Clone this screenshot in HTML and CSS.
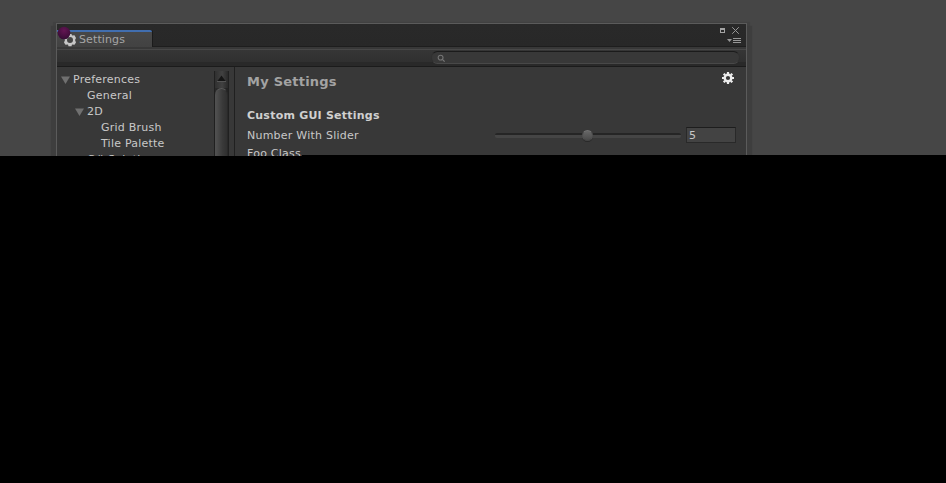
FILE: index.html
```html
<!DOCTYPE html>
<html lang="en">
<head>
<meta charset="utf-8">
<title>Settings</title>
<link rel="stylesheet" href="styles.css">
</head>
<body>
<div class="desktop">
  <div class="window">
    <svg class="cursor-dot" viewBox="0 0 14 14"><defs><radialGradient id="plum" cx=".5" cy=".3" r=".7"><stop offset="0" stop-color="#641553"/><stop offset="1" stop-color="#360c35"/></radialGradient></defs><circle cx="7" cy="7" r="6.3" fill="url(#plum)"/></svg>
    <header class="tabbar">
      <div class="tab">
        <svg class="tab-gear" viewBox="0 0 14 14"><path d="M5.500 1h3l.5 1.500 2.500-.2L13 5l-1 2 1 2.500-1.500 2.300-2.500-.3-.5 1.800h-3L5 11.500l-2.500.3L1 9.500 2 7 1 5l1.500-2.700 2.500.2zM7 4a3 3 0 100 6 3 3 0 000-6z" fill="#c6c6c6" fill-rule="evenodd"/></svg>
        <span class="tab-label">Settings</span>
      </div>
      <svg class="controls" viewBox="0 0 22 20"><rect x="1.500" y="4.500" width="4" height="4" fill="none" stroke="#a4a4a4"/><path d="M1 5.500h5" stroke="#a4a4a4"/><path d="M13.200 3.200l6.600 6.600M19.800 3.200l-6.600 6.600" stroke="#979797"/><path d="M8 15h5l-2.500 3z" fill="#979797"/><path d="M14 14.500h8M14 16.500h8M14 18.500h8" stroke="#979797"/></svg>
    </header>
    <div class="toolbar">
      <div class="search">
        <svg class="lens" viewBox="0 0 10 10"><circle cx="4" cy="4" r="2.700" fill="none" stroke="#777" stroke-width="1.200"/><path d="M6 6l2.500 2.500" stroke="#777" stroke-width="1.400"/></svg>
      </div>
    </div>
    <div class="content">
      <nav class="tree">
        <div class="row"><svg class="arrow" viewBox="0 0 9 8"><path d="M0 .5h9L4.500 8z"/></svg><span>Preferences</span></div>
        <div class="row level1"><span>General</span></div>
        <div class="row level1"><svg class="arrow" viewBox="0 0 9 8"><path d="M0 .5h9L4.500 8z"/></svg><span>2D</span></div>
        <div class="row level2"><span>Grid Brush</span></div>
        <div class="row level2"><span>Tile Palette</span></div>
        <div class="row level1"><span>C# Solution</span></div>
      </nav>
      <div class="scrollbar">
        <div class="scroll-up"><svg viewBox="0 0 14 14"><path d="M3.500 10h8L7.500 4.500z" fill="#151515"/><path d="M3 10.500h9" stroke="#555"/></svg></div>
        <div class="scroll-thumb"></div>
      </div>
      <main class="panel">
        <div class="title-row">
          <h1>My Settings</h1>
          <svg class="gear" viewBox="0 0 12 12"><circle cx="6" cy="6" r="3.300" fill="none" stroke="#ededed" stroke-width="2.400"/><path d="M6 0v2M6 10v2M0 6h2M10 6h2M1.700 1.700l1.400 1.400M8.900 8.900l1.400 1.400M1.700 10.300l1.400-1.400M8.900 3.100l1.400-1.400" stroke="#ededed" stroke-width="2.200"/></svg>
        </div>
        <h2>Custom GUI Settings</h2>
        <div class="field">
          <span class="label">Number With Slider</span>
          <div class="slider"><div class="knob"></div></div>
          <div class="number">5</div>
        </div>
        <div class="foo">Foo Class</div>
      </main>
    </div>
  </div>
  <div class="edge"></div>
</div>
</body>
</html>
```
FILE: styles.css
```css
* { box-sizing: border-box; }
body { margin: 0; height: 483px; overflow: hidden; background: #000; color: #c8c8c8; font: 11px/16px "DejaVu Sans", sans-serif; letter-spacing: .23px; }
svg { display: block; flex: none; }
.desktop { position: relative; height: 156px; padding: 23px 0 0 56px; overflow: hidden; background: #464646; }
.edge { position: absolute; left: 302px; right: 0; bottom: 0; height: 1px; background: #000; }
.window { position: relative; width: 691px; height: 400px; border: 1px solid #5b5b5b; background: #383838; box-shadow: 0 8px 1px 5px #3e3e3e, 0 2px 1px 3px #414141; }
.cursor-dot { position: absolute; z-index: 2; left: 0; top: 2px; width: 14px; height: 14px; }
.tabbar { display: flex; justify-content: space-between; height: 23px; padding: 6px 5px 0 0; background: linear-gradient(#292929, #282828); border-bottom: 1px solid #1e1e1e; }
.tab { display: flex; align-items: center; width: 95px; height: 17px; padding-left: 6px; border-top: 2px solid #416eaf; border-radius: 0 2px 0 0; background: linear-gradient(#484848, #424242); box-shadow: 1px 0 #1b1b1b; color: #a5a5a5; }
.tab-gear { width: 14px; height: 14px; }
.tab-label { margin: 1px 0 0 2px; letter-spacing: .12px; }
.controls { width: 22px; height: 20px; margin-top: -6px; }
.toolbar { display: flex; justify-content: flex-end; height: 20px; padding: 4px 6px 0 0; border-bottom: 1px solid #1b1b1b; background: linear-gradient(#383838 0 2px, #484848 2px 3px, #363636 3px, #303030 15px, #292929 15px); }
.search { width: 309px; height: 13px; padding: 2px 0 0 5px; border: 1px solid #303030; border-top-color: #1b1b1b; border-bottom-color: #484848; border-radius: 7px; background: #383838; }
.lens { width: 9px; height: 9px; }
.content { display: flex; height: 350px; }
.tree { width: 157px; padding: 5px 0 0 4px; overflow: hidden; white-space: nowrap; }
.row { display: flex; align-items: center; height: 16px; padding-left: 12px; }
.row .arrow { width: 9px; height: 8px; margin: 0 3px 0 -12px; fill: #707070; }
.level1 { padding-left: 26px; }
.level2 { padding-left: 40px; }
.scrollbar { width: 15px; margin-top: 4px; border: solid #202020; border-width: 0 1px; background: linear-gradient(90deg, #292929, #2e2e2e 50%, #222); }
.scroll-up { height: 17px; background: linear-gradient(90deg, #303030, #414141 55%, #292929); }
.scroll-up svg { width: 14px; height: 14px; margin-left: -1px; }
.scroll-thumb { height: 300px; border: 1px solid #292929; border-top-color: #595959; border-left-color: #505050; border-radius: 7px; background: linear-gradient(90deg, #505050, #393939 60%, #303030); }
.panel { flex: 1; margin-left: 5px; padding: 5px 10px 0 12px; border-left: 1px solid #202020; }
.title-row { display: flex; justify-content: space-between; height: 34px; }
h1 { margin: 0; font-size: 13px; line-height: 20px; color: #a3a3a3; }
.gear { width: 12px; height: 12px; margin-right: 2px; }
h2 { margin: 2px 0 0; font-size: 11px; line-height: 16px; color: #d0d0d0; }
.field { display: flex; align-items: center; height: 16px; margin-top: 3px; }
.label { width: 248px; padding-top: 2px; }
.slider { position: relative; width: 186px; height: 5px; border-radius: 2px; background: linear-gradient(#252525 0 2px, #454545 2px); }
.knob { position: absolute; left: 87px; top: -3px; width: 11px; height: 11px; border: 1px solid #555; border-color: #737373 #505050 #444; border-radius: 50%; background: linear-gradient(#676767, #4a4a4a); box-shadow: 0 1px #292929; }
.number { width: 50px; height: 16px; margin-left: 5px; padding-left: 2px; border: 1px solid #292929; border-top-color: #1d1d1d; background: #434343; line-height: 16px; }
.foo { margin-top: 3px; }
```
